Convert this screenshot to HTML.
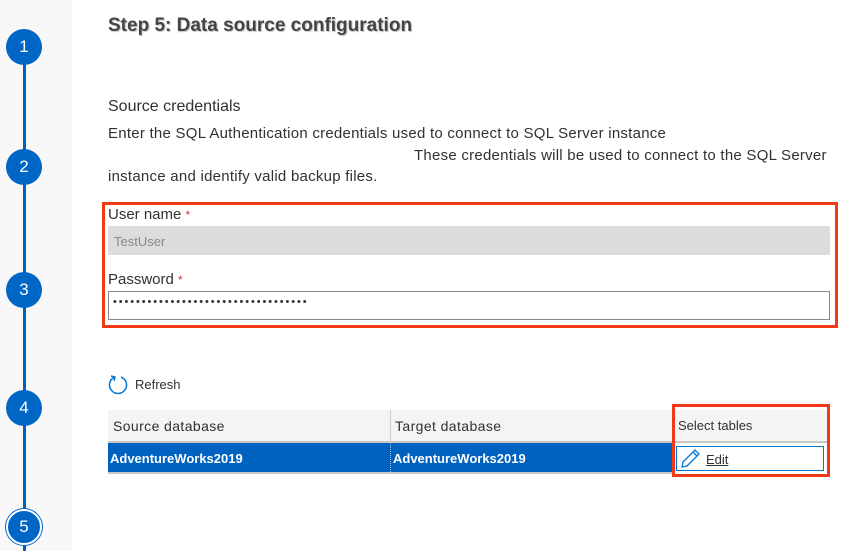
<!DOCTYPE html>
<html><head><style>
body{margin:0;width:846px;height:551px;background:#fff;font-family:"Liberation Sans",sans-serif;position:relative;overflow:hidden;color:#323130}
.side{position:absolute;left:0;top:0;width:72px;height:551px;background:#f8f8f8}
.line{position:absolute;left:23px;top:47px;width:3px;height:504px;background:#0062c0}
.c{position:absolute;left:6px;width:36px;height:36px;border-radius:50%;background:#0066c6;color:#fff;font-size:17px;text-align:center;line-height:36px}
.a{position:absolute;white-space:nowrap}
.red{position:absolute;border:3px solid #f03a17;box-sizing:border-box}
.p{font-size:15px;letter-spacing:0.25px}
</style></head><body>
<div class="side"></div><div class="line"></div>
<div class="c" style="top:29px">1</div>
<div class="c" style="top:149px">2</div>
<div class="c" style="top:272px">3</div>
<div class="c" style="top:390px">4</div>
<div class="c" style="top:509px;width:32px;height:32px;line-height:32px;left:6px;border:2px solid #fff;box-shadow:0 0 0 1px #0066c6">5</div>
<div class="a" style="left:108px;top:15px;font-size:19px;font-weight:bold;color:#444;text-shadow:1px 1px 1px #bbb">Step 5: Data source configuration</div>
<div class="a" style="left:108px;top:98px;font-size:16px;color:#323130">Source credentials</div>
<div class="a p" style="left:108px;top:125px">Enter the SQL Authentication credentials used to connect to SQL Server instance</div>
<div class="a p" style="left:414px;top:147px">These credentials will be used to connect to the SQL Server</div>
<div class="a p" style="left:108px;top:168px">instance and identify valid backup files.</div>
<div class="red" style="left:102px;top:202px;width:736px;height:126px"></div>
<div class="a" style="left:108px;top:206px;font-size:15px;color:#323130">User name <span style="color:#d13438;font-size:12px">*</span></div>
<div class="a" style="left:108px;top:226px;width:722px;height:29px;background:#dcdcdc"></div>
<div class="a" style="left:114px;top:234px;font-size:13px;color:#8a8a8a">TestUser</div>
<div class="a" style="left:108px;top:271px;font-size:15px">Password <span style="color:#d13438;font-size:12px">*</span></div>
<div class="a" style="left:108px;top:291px;width:722px;height:29px;border:1px solid #8a8886;box-sizing:border-box"></div>
<div class="a" style="left:113px;top:296px;font-size:11px;letter-spacing:1.9px">••••••••••••••••••••••••••••••••••</div>
<svg class="a" style="left:107px;top:374px" width="22" height="22" viewBox="0 0 22 22"><path d="M8 3 A8.5 8.5 0 1 0 14 3" fill="none" stroke="#0078d4" stroke-width="1.5"/><path d="M4 2 L8 3 L7 7" fill="none" stroke="#0078d4" stroke-width="1.5"/></svg>
<div class="a" style="left:135px;top:377px;font-size:13px">Refresh</div>
<div class="a" style="left:108px;top:410px;width:720px;height:33px;background:#f4f4f4;border-bottom:2px solid #c8c8c8;box-sizing:border-box"></div>
<div class="a" style="left:390px;top:410px;width:1px;height:33px;background:#ccc"></div>
<div class="a" style="left:113px;top:418px;font-size:14px;letter-spacing:0.4px">Source database</div>
<div class="a" style="left:395px;top:418px;font-size:14px;letter-spacing:0.4px">Target database</div>
<div class="a" style="left:678px;top:418px;font-size:13px">Select tables</div>
<div class="a" style="left:108px;top:443px;width:564px;height:31px;background:#0062c0;border-bottom:2px solid #c8c8c8;box-sizing:border-box"></div>
<div class="a" style="left:390px;top:443px;width:1px;height:31px;border-left:1px dotted #9bbbe0"></div>
<div class="a" style="left:110px;top:451px;font-size:13px;color:#fff;font-weight:bold">AdventureWorks2019</div>
<div class="a" style="left:393px;top:451px;font-size:13px;color:#fff;font-weight:bold">AdventureWorks2019</div>
<div class="a" style="left:676px;top:446px;width:148px;height:25px;border:1px solid #0078d4;box-sizing:border-box"></div>
<svg class="a" style="left:679px;top:448px" width="22" height="22" viewBox="0 0 22 22"><path d="M3 19 L4 14 L16 2 L20 6 L8 18 Z M14 4 L18 8" fill="none" stroke="#0078d4" stroke-width="1.3"/></svg>
<div class="a" style="left:706px;top:452px;font-size:13px;text-decoration:underline">Edit</div>
<div class="red" style="left:672px;top:404px;width:158px;height:73px"></div>
</body></html>
